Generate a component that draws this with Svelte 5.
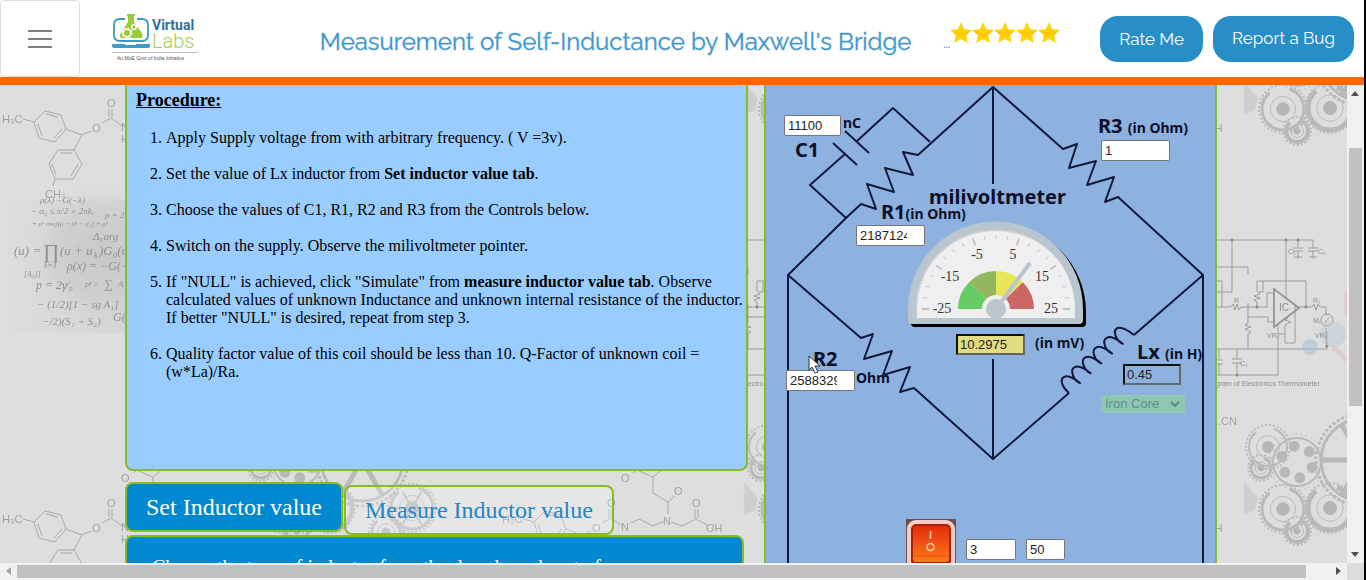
<script>
  let tab = $state('set');
  let c1 = $state('11100');
  let r1 = $state('2187124');
  let r2 = $state('2588329');
  let r3 = $state('1');
  let volts = $state('3');
  let freq = $state('50');

  // polar point on the dial; value runs from -25 to 25
  const cx = 996;
  const cy = 309;
  function dial(value, r) {
    const a = (value / 25) * (Math.PI / 2);
    return [cx + r * Math.sin(a), cy - r * Math.cos(a)];
  }
  const ticks = Array.from({ length: 21 }, (_, i) => {
    const v = -25 + i * 2.5;
    const major = i % 4 === 0;
    const [x1, y1] = dial(v, major ? 67 : 70);
    const [x2, y2] = dial(v, 74);
    return { x1, y1, x2, y2, major };
  });
  function sector(a, b) {
    const p = [dial(a, 38), dial(b, 38), dial(b, 14), dial(a, 14)].map((q) => q.join(' '));
    return `M${p[0]}A38 38 0 0 1 ${p[1]}L${p[2]}A14 14 0 0 0 ${p[3]}Z`;
  }
  const sectors = [
    [-25, -12.5, '#66cc66'],
    [-12.5, 0, '#93b75f'],
    [0, 12.5, '#e7e658'],
    [12.5, 25, '#cc6666']
  ];
  const marks = [
    ['-25', 942, 313],
    ['-15', 950, 281],
    ['-5', 977, 259],
    ['5', 1013, 259],
    ['15', 1042, 281],
    ['25', 1051, 313]
  ];
  const plate = 'M908 309a87.500 87.500 0 0 1 175 0v11q0 4-4 4H912q-4 0-4-4z';
  // windings of the inductor, each one 11 px right of and 10 px above the last
  const coil =
    'M1069 393C1061 386 1060 379 1064 377' +
    [0, 1, 2, 3, 4]
      .map((i) => {
        const x = 1064 + i * 10.7;
        const y = 377 - i * 9.8;
        return `Q${x + 5} ${y - 3} ${x + 16} ${y + 6}C${x + 10} ${y + 4} ${x + 5} ${y - 7} ${x + 10.7} ${y - 9.8}`;
      })
      .join('') +
    'Q1123 326 1134 335';
  const cogs = [
    { x: 261, y: 68, r: 10, w: 3 },
    { x: 268, y: 47, r: 19, w: 2 },
    { x: 283, y: 109, r: 21, w: 3 },
    { x: 297, y: 131, r: 11, w: 4 },
    { x: 330, y: 108, r: 22, w: 5 },
    { x: 412, y: 108, r: 21, w: 3 },
    { x: 386, y: 132, r: 14, w: 3 }
  ];
  const spokes = [0, 60, 120];
  const holes = [0, 60, 120, 180, 240, 300];
  const star = 'M11 0l3.2 7.2 7.8.8-5.9 5.2 1.7 7.7-6.8-4-6.8 4 1.7-7.7L0 8l7.8-.8z';
</script>

<div class="page">
  <header>
    <button class="menu" aria-label="Menu">
      <svg width="24" height="20" viewBox="0 0 24 20"><path d="M0 2h24M0 10h24M0 18h24" stroke="#808080" stroke-width="2" /></svg>
    </button>
    <a class="logo" href="#home" aria-label="Virtual Labs">
      <svg width="88" height="50" viewBox="0 0 88 50">
        <path d="M13 6H8q-6 0-6 6v10q0 6 6 6h22q6 0 6-6V12q0-6-6-6h-5" fill="none" stroke="#4199c6" stroke-width="1.800" />
        <path d="M0 31h13v1h11v-1h14v2q0 2-3 2H3q-3 0-3-2z" fill="#4199c6" />
        <path d="M15 1h8v2h-1v6l8 11q2 5-2 5H11q-5 0-2-5l7-11V3h-1z" fill="#9acb3b" />
        <circle cx="15" cy="20" r="3.800" fill="none" stroke="#fff" stroke-width="1.600" />
        <circle cx="15" cy="20" r="5" fill="none" stroke="#fff" stroke-width="1.200" stroke-dasharray="1.800 2.130" />
        <circle cx="22" cy="14" r="2.400" fill="none" stroke="#fff" stroke-width="1.400" />
        <text class="virtual" x="40" y="17">Virtual</text>
        <text class="labs" x="40" y="35">Labs</text>
        <path d="M0 39.500h86" stroke="#bbb" />
        <text class="moe" x="5" y="47">An MoE Govt of India Initiative</text>
      </svg>
    </a>
    <h1>Measurement of Self-Inductance by Maxwell's Bridge</h1>
    <div class="rating">
      <span>...</span>
      <svg width="110" height="22" viewBox="0 0 110 22" role="img" aria-label="5 stars">
        <defs><linearGradient id="gold" x2="0" y2="1"><stop offset="0" stop-color="#ffd51c" /><stop offset=".45" stop-color="#ffd400" /><stop offset=".5" stop-color="#ffc400" /><stop offset="1" stop-color="#ffe000" /></linearGradient></defs>
        {#each [0, 22, 44, 66, 88] as x}<path d={star} transform="translate({x} 0)" fill="url(#gold)" />{/each}
      </svg>
    </div>
    <button class="pill rate">Rate Me</button>
    <a class="pill" href="#bug">Report a Bug</a>
  </header>

  <div class="viewport">
    <main>
      <svg class="backdrop" aria-hidden="true">
        <defs>
          <radialGradient id="smoke"><stop offset="0" stop-color="#c2c2c2" stop-opacity=".9" /><stop offset=".6" stop-color="#cacaca" stop-opacity=".6" /><stop offset="1" stop-color="#dedede" stop-opacity="0" /></radialGradient>
          <linearGradient id="veil"><stop offset="0" stop-color="#d0d0d0" stop-opacity=".2" /><stop offset="1" stop-color="#cccccc" stop-opacity=".8" /></linearGradient>
          <pattern id="science" width="500" height="400" y="-85" patternUnits="userSpaceOnUse">
            <g fill="none" stroke="#a9a9a9">
              <path d="M23 119l11 3 11-11 16 4 5 14-11 13-16-4-5-16M46 114l12 3M62 129l-8 9M42 136l-4-12M66 129l16 6 9-4M102 123l9-5 11 8M109 117v-8M112 117v-8M82 135l-8 15H58l-9 14 6 15h18l9-15-8-14M72 153H60M52 164l4 11M71 176l7-12M55 179l-2 7" />
              <path d="M131 123l8-4 14 7 11-5M171 122l11 4 14-7 11 6M195 118v-9M198 118v-9M168 114v-12l-15-9V77l-14-6M168 102l7-6M133 73l8-6M153 77l10-8" />
            </g>
            <g class="chem">
              <text x="2" y="123">H₃C</text><text x="92" y="132">O</text><text x="107" y="107">O</text><text x="121" y="131">N</text><text x="121" y="143">H</text><text x="45" y="198">CH₃</text>
              <text x="121" y="82">O</text><text x="163" y="125">N</text><text x="174" y="95">O</text><text x="192" y="107">O</text><text x="206" y="132">OH</text><text x="218" y="25">.CN</text>
            </g>
            <ellipse cx="100" cy="255" rx="80" ry="76" fill="url(#smoke)" />
            <rect x="8" y="200" width="117" height="133" fill="url(#veil)" opacity=".6" />
            <g class="math">
              <text x="40" y="203" font-size="9">ρ(λ)   −G(−λ)</text>
              <text x="31" y="214" font-size="9">− α₀ ≤ π/2 + 2πk,</text><text x="105" y="218" font-size="9">p = 2</text>
              <text x="32" y="226" font-size="7">+ ρᵘ cos[(ρ − jθ − α₁] + ρⁿ</text>
              <text x="93" y="240" font-size="11">Δ<tspan font-size="7" dy="2">L</tspan><tspan dy="-2"> arg</tspan></text>
              <text x="14" y="255" font-size="13">(u) =</text><text x="43" y="258" font-size="20">∏</text><text x="60" y="255" font-size="13">(u + u</text><text x="94" y="258" font-size="8">k</text><text x="99" y="255" font-size="13">)G₀(u</text>
              <text x="44" y="268" font-size="8">k=1</text><text x="67" y="270" font-size="12">ρ(x) = −G(−</text>
              <text x="24" y="277" font-size="8">[A₀)]</text><text x="36" y="289" font-size="12">p = 2γ⁄₀</text><text x="85" y="287" font-size="8">ρⁿ ></text><text x="104" y="288" font-size="12">∑</text><text x="118" y="287" font-size="9">A</text>
              <text x="37" y="308" font-size="11">− (1/2)[1 − sg A₁]</text><text x="42" y="325" font-size="11">−/2)(S₁ + S₂)</text><text x="113" y="321" font-size="12">G(</text>
            </g>
            <g class="cogs" fill="none" stroke="#aaa">
              {#each cogs as c}
                <circle cx={c.x} cy={c.y} r={c.r} stroke-width={c.w} stroke-dasharray="{c.r * 4} {c.r}" />
                <circle cx={c.x} cy={c.y} r={c.r + 3} stroke-width="2" stroke-dasharray="2 2" />
                <circle cx={c.x} cy={c.y} r={c.r * 0.6} />
                <circle cx={c.x} cy={c.y} r={c.r * 0.3} fill="#a4a4a4" />
              {/each}
              <circle cx="297" cy="62" r="24" stroke-width="2" /><circle cx="297" cy="62" r="28" stroke-dasharray="2 3" />
              {#each holes as a}<circle cx="313" cy="62" r="5" fill="#a6a6a6" transform="rotate({a + 20} 297 62)" />{/each}
              <circle cx="362" cy="60" r="41" stroke-width="3" /><circle cx="362" cy="60" r="46" stroke-width="3" stroke-dasharray="3 2" />
              {#each spokes as a}
                <path d="M321 60h82" stroke-width="5" transform="rotate({a} 362 60)" />
                <path d="M393 108h38" stroke-width="2" transform="rotate({a} 412 108)" />
              {/each}
              <path d="M244 82l14 16-3 12-11 5z" fill="#c8c8c8" stroke="#d2d2d2" />
            </g>
            <g fill="none" stroke="#949494" stroke-width=".9">
              <path d="M217 240h96v8M232 240v52h-15M217 267h31v7M217 281h5v26M286 240v60M298 240v7M293 248h10M293 251h10M298 251v8M294 257h8M308 248h10M308 251h10M313 251v8M309 257h8M217 307h14l2-3 2 6 2-6 2 6 2-3h26v-14h7M257 307v-5l-3-2 6-2-6-2 6-2-3-3v-10h49v27M263 281v11h-4M248 303v20l-3 2 6 2-6 2 6 3-3 2v14M248 317h20v5h6M299 307h13l2-3 2 6 2-6 2 3h6v8M326 328v20M278 324v51h-61M217 349h110v-18M237 349v10M232 359h10M232 363h10M237 363v12M219 349v10M215 360h8M215 364h8M219 364v11M288 318l-3 2 6 2-6 3v18h10v-37M278 334h6" />
              <path d="M274 289v38l25-19z" stroke-width="1.800" /><circle cx="327" cy="320" r="6" /><path d="M324 323l6-6" />
              <g fill="#888" stroke="none"><circle cx="232" cy="240" r="1.500" /><circle cx="286" cy="240" r="1.500" /><circle cx="298" cy="240" r="1.500" /><circle cx="306" cy="307" r="1.500" /><circle cx="257" cy="307" r="1.500" /><circle cx="237" cy="375" r="1.500" /><circle cx="327" cy="346" r="1.500" /></g>
            </g>
            <circle cx="310" cy="347" r="8" fill="#a9bed0" opacity=".55" /><circle cx="333" cy="334" r="13" fill="#b6cad9" opacity=".45" /><path d="M332 346l15 14M347 290v25" stroke="#e0aaaa" stroke-width="5" opacity=".35" />
            <g class="tiny"><text x="288" y="254">C₁</text><text x="318" y="254">C₂</text><text x="234" y="303">R</text><text x="279" y="311" font-size="10">IC</text><text x="313" y="303">R₇</text><text x="313" y="323">M₁</text><text x="267" y="338">VR₁</text><text x="315" y="338">VR₂</text><text x="240" y="366">C₁</text><text x="216" y="386">gram of Electronics Thermometer</text></g>
          </pattern>
        </defs>
        <rect width="100%" height="100%" fill="#dedede" /><rect width="100%" height="100%" fill="url(#science)" />
      </svg>

      <section class="left">
        <article class="procedure">
          <h2>Procedure:</h2>
          <ol>
            <li>Apply Supply voltage from with arbitrary frequency. ( V =3v).</li>
            <li>Set the value of Lx inductor from <b>Set inductor value tab</b>.</li>
            <li>Choose the values of C1, R1, R2 and R3 from the Controls below.</li>
            <li>Switch on the supply. Observe the milivoltmeter pointer.</li>
            <li>If "NULL" is achieved, click "Simulate" from <b>measure inductor value tab</b>. Observe calculated values of unknown Inductance and unknown internal resistance of the inductor. If better "NULL" is desired, repeat from step 3.</li>
            <li>Quality factor value of this coil should be less than 10. Q-Factor of unknown coil = (w*La)/Ra.</li>
          </ol>
        </article>
        <div class="tabs">
          <button class:active={tab === 'set'} onclick={() => (tab = 'set')}>Set Inductor value</button>
          <button class:active={tab === 'measure'} onclick={() => (tab = 'measure')}>Measure Inductor value</button>
        </div>
        <div class="tabpanel">Choose the type of inductor from the dropdown box to form</div>
      </section>

      <section class="bridge">
        <div class="canvas">
          <svg width="449" height="478" viewBox="766 85 449 478">
            <g fill="none" stroke="#11183a" stroke-width="2" stroke-linejoin="round">
              <path d="M788 570V275L846 218 861 204 876 209 867 184 894 192 885 168 913 175 903 152 918 155 993 87 1063 149 1077 144 1069 168 1096 161 1087 185 1114 177 1105 202 1118 197 1203 275V570M993 87v97M993 359v100" />
              <path d="M846 218L810 185 845 154M833 143l24 22M845 131l24 22M857 141L893 108 930 142" />
              <path d="M788 275L861 338 873 334 864 359 892 351 883 375 910 367 900 392 914 388 993 459 1069 393M1134 335L1203 275" />
              <path d={coil} />
            </g>
            <path d={plate} fill="#000" transform="translate(3 3)" />
            <path d={plate} fill="#bac6cf" />
            <path d="M916 309a79.500 79 0 0 1 159 0v9H916z" fill="#efefef" />
            <path d="M916.500 318v-9A79 78 0 0 1 1030 238" fill="none" stroke="#d0d0d0" stroke-width="1.500" />
            {#each ticks as t}<line x1={t.x1} y1={t.y1} x2={t.x2} y2={t.y2} stroke="#b9c6d0" stroke-width={t.major ? 2 : 1} />{/each}
            {#each sectors as [a, b, color]}<path d={sector(a, b)} fill={color} />{/each}
            {#each marks as [label, x, y]}<text class="mark" {x} {y}>{label}</text>{/each}
            <path d="M996 309l34-46" stroke="#bac6cf" stroke-width="4" /><circle cx="996" cy="309" r="10" fill="#bac6cf" />
          </svg>

          <label class="name at-c1" for="c1">C1</label><input class="c1" id="c1" bind:value={c1} /><span class="unit at-nc">nC</span>
          <label class="name at-r1" for="r1">R1<small>(in Ohm)</small></label><input class="r1" id="r1" bind:value={r1} />
          <label class="name at-r3" for="r3">R3 <small>(in Ohm)</small></label><input class="r3" id="r3" bind:value={r3} />
          <label class="name at-r2" for="r2">R2</label><input class="r2" id="r2" bind:value={r2} /><span class="unit at-ohm">Ohm</span>
          <label class="name at-mv" for="mv">milivoltmeter</label><input class="mv" id="mv" value="10.2975" readonly /><span class="unit at-unit">(in mV)</span>
          <label class="name at-lx" for="lx">Lx <small>(in H)</small></label><input class="lx" id="lx" value="0.45" readonly />
          <select aria-label="Core" disabled><option>Iron Core</option></select>
          <svg class="chevron" width="10" height="6" viewBox="0 0 10 6"><path d="M1 1l4 4 4-4" fill="none" stroke="#5f8379" stroke-width="2" /></svg>
          <button class="switch" aria-label="Supply switch">
            <svg width="50" height="50" viewBox="0 0 50 50">
              <defs><linearGradient id="lamp" x2="0" y2="1"><stop offset="0" stop-color="#e42c0b" /><stop offset="1" stop-color="#ff7a1c" /></linearGradient></defs>
              <path d="M0 0h50v50H0z" fill="#6b4e50" /><rect x="1" y="1" width="48" height="50" rx="9" fill="#f6cdc8" /><rect x="5" y="5" width="40" height="42" rx="5" fill="#a9210b" /><rect x="7" y="7" width="36" height="36" rx="3" fill="url(#lamp)" />
              <path d="M24.500 12v8" stroke="#ffd1a6" stroke-width="1.500" /><circle cx="24.500" cy="28" r="3.500" fill="none" stroke="#ffd1a6" stroke-width="1.500" /><path d="M8 37h34" stroke="#e7500c" />
            </svg>
          </button>
          <input class="volts" aria-label="Supply voltage" bind:value={volts} />
          <input class="freq" aria-label="Frequency" bind:value={freq} />
          <svg class="pointer" width="14" height="20" viewBox="0 0 14 20"><path d="M1 1v14l3-3 3 6 3-1-3-6h5z" fill="#fff" stroke="#333" /></svg>
        </div>
      </section>
    </main>
    <div class="vbar"><svg width="16" height="17"><path d="M4 11h8L8 6z" fill="#505050" /></svg><i></i><svg width="16" height="17"><path d="M4 6h8l-4 5z" fill="#505050" /></svg></div>
    <div class="hbar"><svg width="17" height="17"><path d="M11 4v8L6 8z" fill="#a3a3a3" /></svg><i></i><svg width="17" height="17"><path d="M6 4v8l5-4z" fill="#505050" /></svg></div>
    <div class="corner"></div>
  </div>
</div>

<style>
  :global(body) { margin: 0; overflow: hidden; }
  .page, .page * { box-sizing: border-box; }
  .page { display: flex; flex-direction: column; height: 100vh; background: #fff; border-right: 2px solid #000; font-family: "Liberation Serif", serif; }
  header { display: flex; align-items: flex-start; flex: none; height: 85px; padding-right: 10px; border-bottom: 8px solid #ff6800; font-family: Raleway, Lato, sans-serif; }
  svg { display: block; }
  .menu { display: grid; place-items: center; width: 80px; height: 77px; border: 1px solid #ddd; border-radius: 4px; background: #fff; }
  .logo { margin: 13px 0 0 32px; }
  .virtual { font: bold 14px Roboto, sans-serif; fill: #2c6f9f; }
  .labs { font: 300 20px Roboto, sans-serif; fill: #a5cf4d; }
  .moe { font: 5px "Liberation Sans", sans-serif; fill: #555; }
  h1 { margin: 26px auto 0; padding-left: 88px; color: #3f97cb; font-size: 24px; line-height: 32px; font-weight: 400; white-space: nowrap; -webkit-text-stroke: 1px rgb(63 151 203 / .4); }
  .rating { display: flex; margin: 22px 40px 0 0; color: #3f97cb; }
  .rating span { width: 7px; padding-top: 17px; font-size: 10px; line-height: 12px; font-weight: bold; }
  .pill { flex: none; height: 46px; margin-top: 16px; padding: 0 19px; border: 0; border-radius: 18px; background: #288ec8; color: #fff; font: 400 17px/45px Raleway, Lato, sans-serif; text-decoration: none; white-space: nowrap; }
  .rate { margin-right: 10px; }

  .viewport { display: grid; flex: 1; grid-template: minmax(0, 1fr) 17px / minmax(0, 1fr) 17px; min-height: 0; background: #f1f1f1; }
  main { position: relative; display: grid; grid-template-columns: 125fr 623fr 16fr 453fr 130fr; overflow: hidden; min-height: 0; }
  .backdrop { position: absolute; inset: 0; width: 100%; height: 100%; }
  .chem { font: 11px "Liberation Sans", sans-serif; fill: #a2a2a2; }
  .math { font-family: "Liberation Serif", serif; font-style: italic; fill: #8f8f8f; }
  .cogs { opacity: .7; }
  .tiny { font: 7px "Liberation Sans", sans-serif; fill: #8c8c8c; }
  .left { position: relative; grid-column: 2; }
  .procedure { height: 386px; padding: 4px 0 0 9px; border: 2px solid #86bc25; border-top: 0; border-radius: 0 0 8px 8px; background: #99ccff; }
  h2 { margin: 0 0 18px; font-size: 18px; line-height: 22px; text-decoration: underline; }
  ol { margin: 0; padding-left: 30px; font-size: 16px; line-height: 18px; }
  li { margin-bottom: 18px; }
  .tabs { display: flex; align-items: flex-start; gap: 1px; margin-top: 11px; }
  .tabs button { height: 50px; margin-top: 3px; padding: 0 19px; border: 2px solid #86bc25; border-radius: 8px; background: rgb(255 255 255 / .25); color: #2485c4; font: 24px "Liberation Serif", serif; }
  .tabs button.active { margin-top: 0; background: #0088d1; color: #fff; }
  .tabpanel { height: 200px; margin-right: 4px; padding: 15px 25px; border: 2px solid #86bc25; border-radius: 8px; background: #0088d1; color: #fff; font-size: 20px; line-height: 30px; white-space: nowrap; }
  .bridge { position: relative; grid-column: 4; height: 600px; border: solid #86bc25; border-width: 0 2px; background: #8eb2e0; }
  .canvas { position: relative; width: 449px; margin: 0 auto; color: #0c1028; }
  .mark { font: 14px "Liberation Serif", serif; text-anchor: middle; fill: #333; }

  .name, .unit { position: absolute; font: bold 20px/24px "Noto Sans", sans-serif; white-space: nowrap; }
  .unit, small { font-size: 14px; }
  .at-c1 { left: 29px; top: 53px; }
  .at-nc { left: 77px; top: 26px; }
  .at-r1 { left: 115px; top: 115px; }
  .at-r3 { left: 332px; top: 29px; }
  .at-r2 { left: 47px; top: 262px; }
  .at-ohm { left: 90px; top: 281px; }
  .at-mv { left: 163px; top: 100px; }
  .at-unit { left: 269px; top: 246px; }
  .at-lx { left: 371px; top: 255px; }
  input { position: absolute; width: 69px; height: 21px; padding: 1px 17px 1px 3px; border: 1px solid #767676; border-radius: 2px; background: #fff; color: #222; font: 13px "Liberation Sans", sans-serif; }
  .c1 { left: 18px; top: 30px; width: 57px; padding-right: 2px; }
  .r1 { left: 90px; top: 140px; }
  .r3 { left: 335px; top: 55px; }
  .r2 { left: 20px; top: 285px; }
  .mv, .lx { padding: 1px 2px; border: 2px inset #666; border-radius: 0; background: #e2dd80; }
  .mv { left: 190px; top: 249px; }
  .lx { left: 357px; top: 279px; width: 58px; background: #8eb2e0; }
  .volts { left: 200px; top: 454px; width: 50px; padding-right: 2px; }
  .freq { left: 260px; top: 454px; width: 39px; padding-right: 2px; }
  select { position: absolute; left: 335px; top: 310px; width: 84px; height: 18px; padding: 0 3px; border: 1px solid #8fcabb; border-radius: 0; appearance: none; background: #8dc7b3; color: #658d83; opacity: 1; font: 13px "Liberation Sans", sans-serif; line-height: 16px; }
  .chevron { position: absolute; left: 404px; top: 316px; }
  .switch { position: absolute; left: 140px; top: 434px; padding: 0; border: 0; background: none; }
  .pointer { position: absolute; left: 42px; top: 270px; }

  .vbar { display: flex; flex-direction: column; }
  .vbar i { flex: none; width: 13px; height: 54%; margin: 46px 0 auto 2px; background: #c1c1c1; }
  .hbar { display: flex; align-items: center; min-width: 0; }
  .hbar i { flex: 0 0 95.7%; height: 13px; margin-right: auto; background: #c1c1c1; }
  .hbar svg, .vbar svg { flex: none; }
  .corner { background: #dcdcdc; }
</style>
